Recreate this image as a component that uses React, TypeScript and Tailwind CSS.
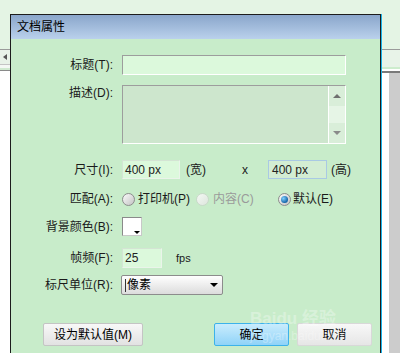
import React from "react";

const font = { fontFamily: '"Liberation Sans", "Noto Sans CJK SC", sans-serif' };

function Label({ children, top = false }: { children: React.ReactNode; top?: boolean }) {
  return (
    <div className={`w-[102px] shrink-0 text-right text-[12px] leading-[14px] text-[#1a1a1a] ${top ? "pt-[1px]" : ""}`}>
      {children}
    </div>
  );
}

function Radio({ checked = false, disabled = false }: { checked?: boolean; disabled?: boolean }) {
  return (
    <span
      className={`relative inline-flex h-[13px] w-[13px] shrink-0 items-center justify-center rounded-full border ${
        disabled
          ? "border-[#c9d9c9] bg-gradient-to-br from-[#f4f8f4] to-[#dde6dd]"
          : "border-[#8c8c8c] bg-gradient-to-br from-[#fafafa] to-[#c4c4c4]"
      }`}
    >
      {checked && (
        <span className="h-[7px] w-[7px] rounded-full bg-[radial-gradient(circle_at_35%_35%,#7fd0ff,#1565a8_70%)]" />
      )}
    </span>
  );
}

export default function App() {
  return (
    <div className="relative flex h-[353px] w-[400px] overflow-hidden bg-[#e4f4e4]" style={font}>
      {/* left background strip */}
      <div className="flex w-[10px] shrink-0 flex-col">
        <div className="h-[49px] bg-[#e4f4e4]" />
        <div className="h-[1px] bg-[#9a9a9a]" />
        <div className="flex h-[14px] items-center bg-[#e8f2e8] pl-[3px]">
          <span className="block h-0 w-0 border-y-[3px] border-r-[4px] border-y-transparent border-r-[#555]" />
        </div>
        <div className="h-[1px] bg-[#c4c4c4]" />
        <div className="h-[3px] bg-[#f4f8f4]" />
        <div className="h-[2px] bg-[#cfe9cf]" />
        <div className="h-[1px] bg-[#8a8a8a]" />
        <div className="flex-1 bg-white" />
      </div>

      {/* dialog */}
      <div className="mt-[14px] flex w-[372px] shrink-0 flex-col border-r border-[#19b4ea]">
        <div className="flex flex-1 flex-col border-l border-r border-t border-[#1c1c1c]">
          <div className="flex h-[24px] items-center bg-gradient-to-b from-[#8aa6cb] to-[#bad1ec] pl-[6px] text-[12px] text-black">
            文档属性
          </div>
          <div className="flex flex-1 flex-col bg-[#c8ecca] text-[12px] text-[#1a1a1a]">
            {/* 标题 */}
            <div className="mt-[16px] flex h-[20px] items-center">
              <Label>标题(T):</Label>
              <div className="ml-[9px] h-[20px] w-[224px] border border-b-white border-l-[#9d9d9d] border-r-white border-t-[#9d9d9d] bg-[#dcf9dc]" />
            </div>
            {/* 描述 */}
            <div className="mt-[10px] flex h-[59px] items-start">
              <Label top>描述(D):</Label>
              <div className="ml-[9px] flex h-[59px] w-[224px] border border-b-white border-l-[#9d9d9d] border-r-white border-t-[#9d9d9d] bg-[#cde6cd]">
                <div className="flex-1" />
                <div className="flex w-[17px] flex-col border-l border-white bg-[#d9eed9]">
                  <div className="flex h-[20px] items-center justify-center">
                    <span className="block h-0 w-0 border-x-[4px] border-b-[4px] border-x-transparent border-b-[#707070]" />
                  </div>
                  <div className="flex-1 bg-[#e6f5e6]" />
                  <div className="flex h-[20px] items-center justify-center">
                    <span className="block h-0 w-0 border-x-[4px] border-t-[4px] border-x-transparent border-t-[#8a8a8a]" />
                  </div>
                </div>
              </div>
            </div>
            {/* 尺寸 */}
            <div className="mt-[16px] flex h-[19px] items-center">
              <Label>尺寸(I):</Label>
              <div className="ml-[9px] flex h-[19px] w-[58px] items-center border border-[#eaf4ea] border-l-[#d4e4d4] border-t-[#d4e4d4] bg-[#dcf9dc] pl-[2px] text-[12px] text-[#222]">
                400 px
              </div>
              <span className="ml-[6px] w-[56px]">(宽)</span>
              <span className="w-[26px]">x</span>
              <div className="flex h-[19px] w-[59px] items-center border border-[#a9c9e4] bg-[#d3edd3] pl-[3px] text-[12px] text-[#222]">
                400 px
              </div>
              <span className="ml-[4px]">(高)</span>
            </div>
            {/* 匹配 */}
            <div className="mt-[12px] flex h-[16px] items-center">
              <Label>匹配(A):</Label>
              <div className="ml-[9px] flex w-[74px] items-center">
                <Radio />
                <span className="ml-[3px]">打印机(P)</span>
              </div>
              <div className="flex w-[82px] items-center">
                <Radio disabled />
                <span className="ml-[4px] text-[#9a9a9a]">内容(C)</span>
              </div>
              <div className="flex items-center">
                <Radio checked />
                <span className="ml-[2px]">默认(E)</span>
              </div>
            </div>
            {/* 背景颜色 */}
            <div className="mt-[10px] flex h-[19px] items-center">
              <Label>背景颜色(B):</Label>
              <div className="relative ml-[9px] h-[19px] w-[20px] border border-[#8a8a8a] border-b-[#c8c8c8] border-r-[#c8c8c8] bg-white">
                <span className="absolute bottom-[1px] right-[1px] block h-0 w-0 border-x-[3px] border-t-[3px] border-x-transparent border-t-black" />
              </div>
            </div>
            {/* 帧频 */}
            <div className="mt-[12px] flex h-[20px] items-center">
              <Label>帧频(F):</Label>
              <div className="ml-[9px] flex h-[20px] w-[40px] items-center border border-[#eaf4ea] border-l-[#d4e4d4] border-t-[#d4e4d4] bg-[#dcf9dc] pl-[2px] text-[12px] text-[#222]">
                25
              </div>
              <span className="ml-[14px] text-[11px]">fps</span>
            </div>
            {/* 标尺单位 */}
            <div className="mt-[7px] flex h-[20px] items-center">
              <Label>标尺单位(R):</Label>
              <div className="ml-[8px] flex h-[20px] w-[102px] items-center justify-between rounded-[2px] border border-[#8c8c8c] bg-gradient-to-b from-[#ffffff] to-[#dcdcdc] pl-[3px] pr-[4px] text-[12px] text-black">
                <span className="border-l border-[#333] pl-[1px] leading-[13px]">像素</span>
                <span className="block h-0 w-0 border-x-[4px] border-t-[4px] border-x-transparent border-t-black" />
              </div>
            </div>
            {/* buttons */}
            <div className="mt-[28px] flex h-[23px] items-center">
              <div className="ml-[32px] flex h-[23px] w-[100px] items-center justify-center rounded-[2px] border border-[#c4c4c4] bg-gradient-to-b from-[#f8f8f8] to-[#e2e2e2] text-[12px] text-black">
                设为默认值(M)
              </div>
              <div className="ml-[71px] flex h-[23px] w-[75px] items-center justify-center rounded-[2px] border border-[#3cb2ea] bg-gradient-to-b from-[#c9ecfd] to-[#8fd3f8] text-[12px] text-black">
                确定
              </div>
              <div className="ml-[8px] flex h-[23px] w-[75px] items-center justify-center rounded-[2px] border border-[#d8d8d8] bg-gradient-to-b from-[#f8f8f8] to-[#e6e6e6] text-[12px] text-black">
                取消
              </div>
            </div>
          </div>
        </div>
      </div>

      {/* right background strip */}
      <div className="flex flex-1 flex-col">
        <div className="h-[49px] bg-[#e4f4e4]" />
        <div className="h-[1px] bg-[#9a9a9a]" />
        <div className="h-[17px] bg-[#e8f3e8]" />
        <div className="h-[2px] bg-[#cdeccd]" />
        <div className="h-[2px] bg-white" />
        <div className="h-[2px] bg-[#7a7a7a]" />
        <div className="flex flex-1">
          <div className="w-[7px] bg-white" />
          <div className="flex-1 bg-[#cccccc]" />
        </div>
      </div>

      {/* watermark */}
      <div className="pointer-events-none absolute left-[250px] top-[310px] flex flex-col leading-none text-white opacity-30">
        <span className="text-[17px] font-bold">Baidu 经验</span>
        <span className="mt-[3px] text-[12px]">jingyan.baidu.com</span>
      </div>
    </div>
  );
}
